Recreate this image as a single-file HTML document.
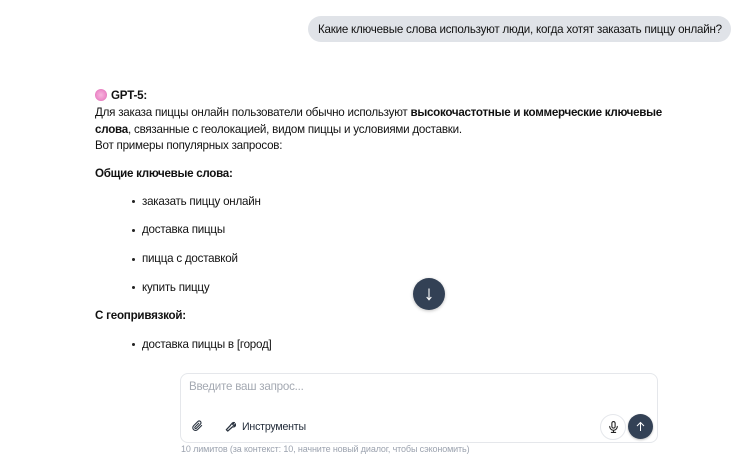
<!DOCTYPE html>
<html lang="ru">
<head>
<meta charset="utf-8">
<style>
html,body{margin:0;padding:0;width:751px;height:457px;overflow:hidden;background:#fff;}
body{font-family:"Liberation Sans",sans-serif;font-size:11.6px;letter-spacing:-.23px;color:#111;position:relative;}
.t{position:absolute;white-space:nowrap;line-height:17px;}
b{font-weight:700;}
.bubble{position:absolute;left:308px;top:16px;width:423px;height:26px;background:#e0e3e8;border-radius:13px;}
.dot{position:absolute;width:3.4px;height:3.4px;border-radius:50%;background:#222;left:132px;}
.emoji{position:absolute;left:95px;top:89px;width:12px;height:12px;border-radius:50%;background:radial-gradient(circle at 50% 50%,#f7b5dd 0,#ee8ecb 55%,#d65aa8 100%);}
.down{position:absolute;left:413px;top:278px;width:32px;height:32px;border-radius:50%;background:#334155;box-shadow:0 1px 3px rgba(0,0,0,.25);}
.box{position:absolute;left:180px;top:373px;width:476px;height:68px;border:1px solid #e5e7eb;border-radius:8px;background:#fff;}
.mic{position:absolute;left:600px;top:414px;width:24px;height:24px;border:1px solid #e5e7eb;border-radius:50%;background:#fff;box-sizing:content-box;}
.send{position:absolute;left:628px;top:414px;width:25px;height:25px;border-radius:50%;background:#334155;box-shadow:0 1px 2px rgba(0,0,0,.25);}
svg{position:absolute;display:block;}
</style>
</head>
<body>
<div class="bubble"></div>
<div class="t" style="left:318px;top:21px;">Какие ключевые слова используют люди, когда хотят заказать пиццу онлайн?</div>

<div class="emoji"></div>
<div class="t" style="left:111px;top:87px;"><b>GPT-5:</b></div>
<div class="t" style="left:95px;top:104px;">Для заказа пиццы онлайн пользователи обычно используют <b style="letter-spacing:-.27px">высокочастотные и коммерческие ключевые</b></div>
<div class="t" style="left:95px;top:121px;"><b>слова</b>, связанные с геолокацией, видом пиццы и условиями доставки.</div>
<div class="t" style="left:95px;top:137px;">Вот примеры популярных запросов:</div>
<div class="t" style="left:95px;top:165px;"><b style="letter-spacing:-.28px">Общие ключевые слова:</b></div>

<div class="dot" style="top:200px;"></div>
<div class="t" style="left:142px;top:193px;">заказать пиццу онлайн</div>
<div class="dot" style="top:229px;"></div>
<div class="t" style="left:142px;top:221px;">доставка пиццы</div>
<div class="dot" style="top:258px;"></div>
<div class="t" style="left:142px;top:250px;">пицца с доставкой</div>
<div class="dot" style="top:286px;"></div>
<div class="t" style="left:142px;top:279px;">купить пиццу</div>
<div class="t" style="left:95px;top:307px;"><b>С геопривязкой:</b></div>
<div class="dot" style="top:343px;"></div>
<div class="t" style="left:142px;top:336px;">доставка пиццы в [город]</div>

<div class="down">
<svg style="left:0;top:0" width="32" height="32" viewBox="0 0 32 32" fill="none" stroke="#fff" stroke-width="1.1"><path d="M16 10.500V21.500M13.700 19L16 21.800L18.300 19"/></svg>
</div>

<div class="box"></div>
<div class="t" style="left:189px;top:378px;color:#a4a9b2;">Введите ваш запрос...</div>

<svg style="left:192px;top:420px" width="11" height="12" viewBox="0 0 24 24" fill="none" stroke="#2b3440" stroke-width="2.4" stroke-linecap="round" stroke-linejoin="round"><path d="M21 11l-9 9a6 6 0 0 1-8.500-8.500l9.300-9.300a4 4 0 0 1 5.700 5.700l-9.300 9.300a2 2 0 0 1-2.800-2.800l8.500-8.500"/></svg>
<svg style="left:225px;top:421px" width="11" height="11" viewBox="0 0 24 24" fill="none" stroke="#2b3440" stroke-width="2.8" stroke-linecap="round" stroke-linejoin="round"><path d="M14.500 6.500a5 5 0 0 1 6-3l-3.500 3.500 1 2 2 1 3-3.500a5 5 0 0 1-6.500 6L6 22l-3-3 9-9.500a5 5 0 0 1 2.500-3z"/></svg>
<div class="t" style="left:242px;top:419px;color:#1f2937;font-size:10.6px;letter-spacing:-.2px;">Инструменты</div>

<div class="mic">
<svg style="left:6px;top:5px" width="13" height="14" viewBox="0 0 24 24" fill="none" stroke="#222" stroke-width="2" stroke-linecap="round" stroke-linejoin="round"><rect x="9" y="2" width="6" height="12" rx="3"/><path d="M5 11a7 7 0 0 0 14 0M12 18v4M8 22h8"/></svg>
</div>
<div class="send">
<svg style="left:0;top:0" width="25" height="25" viewBox="0 0 25 25" fill="none" stroke="#fff" stroke-width="1"><path d="M12.500 17V8.500M9 12L12.500 8.500L16 12"/></svg>
</div>

<div class="t" style="left:181px;top:441px;color:#9ca3af;font-size:9px;letter-spacing:-.13px;line-height:16px;">10 лимитов (за контекст: 10, начните новый диалог, чтобы сэкономить)</div>
</body>
</html>
